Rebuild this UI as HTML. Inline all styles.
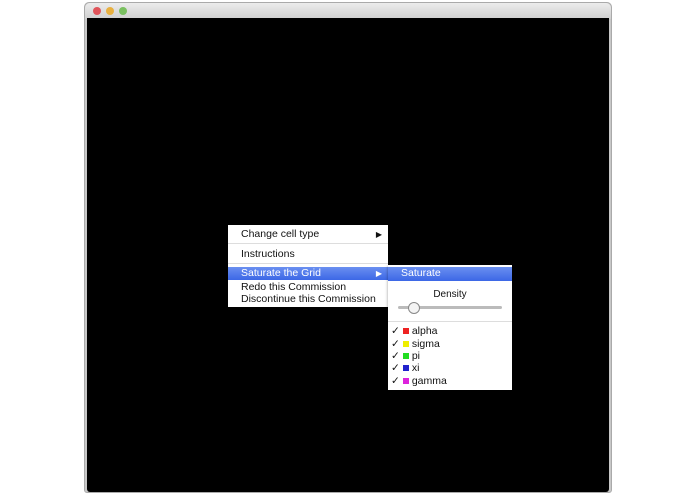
<!DOCTYPE html><html><head><style>
body{margin:0;width:695px;height:494px;background:#fff;position:relative;overflow:hidden;font-family:"Liberation Sans",sans-serif;font-size:10.5px;color:#111}
.win{position:absolute;left:84px;top:2px;width:528px;height:491px;background:#c8c8c8;border-radius:5px 5px 3px 3px;border:1px solid #aaa;box-sizing:border-box}
.tb{position:absolute;left:0;top:0;right:0;height:16px;background:linear-gradient(#ececec,#cfcfcf);border-radius:5px 5px 0 0}
.dot{position:absolute;top:4px;width:8px;height:8px;border-radius:50%}
.blk{position:absolute;left:87px;top:18px;width:522px;height:474px;background:#000;border-radius:0 0 3px 3px}
.m{position:absolute;background:#fff;box-shadow:0 1px 3px rgba(0,0,0,.4)}
.it{position:absolute;left:0;right:0;height:13px;line-height:13px;padding-left:13px}
.hl{background:linear-gradient(#6a8ff0,#3c67e6);color:#fff}
.sep{position:absolute;left:0;right:0;height:1px;background:#ddd}
.ar{position:absolute;right:6px;font-size:8px}
.sq{display:inline-block;width:6px;height:6px;margin:0 3px 0 3px}
</style></head><body>
<div class="win"><div class="tb">
<div class="dot" style="left:8px;background:#e0545a"></div>
<div class="dot" style="left:21px;background:#e8b040"></div>
<div class="dot" style="left:34px;background:#7ac060"></div></div></div>
<div class="blk"></div>
<div class="m" style="left:228px;top:225px;width:160px;height:82px">
<div class="it" style="top:3px">Change cell type<span class="ar">▶</span></div>
<div class="sep" style="top:18px"></div>
<div class="it" style="top:23px">Instructions</div>
<div class="sep" style="top:38px"></div>
<div class="it hl" style="top:42px">Saturate the Grid<span class="ar">▶</span></div>
<div class="it" style="top:56px">Redo this Commission</div>
<div class="it" style="top:68px">Discontinue this Commission</div>
</div>
<div class="m" style="left:388px;top:265px;width:124px;height:125px">
<div class="it hl" style="top:2px;height:14px">Saturate</div>
<div style="position:absolute;top:24px;left:0;right:0;text-align:center;font-size:10px">Density</div>
<div style="position:absolute;top:41px;left:10px;width:104px;height:3px;background:#bbb;border-radius:2px"></div>
<div style="position:absolute;top:37px;left:20px;width:10px;height:10px;border-radius:50%;background:#f4f4f4;border:1px solid #888"></div>
<div class="sep" style="top:56px"></div>
<div class="it" style="top:60px;padding-left:3px">✓<span class="sq" style="background:#e22"></span>alpha</div>
<div class="it" style="top:73px;padding-left:3px">✓<span class="sq" style="background:#ee0"></span>sigma</div>
<div class="it" style="top:85px;padding-left:3px">✓<span class="sq" style="background:#2d2"></span>pi</div>
<div class="it" style="top:97px;padding-left:3px">✓<span class="sq" style="background:#22c"></span>xi</div>
<div class="it" style="top:110px;padding-left:3px">✓<span class="sq" style="background:#d2d"></span>gamma</div>
</div>
</body></html>
